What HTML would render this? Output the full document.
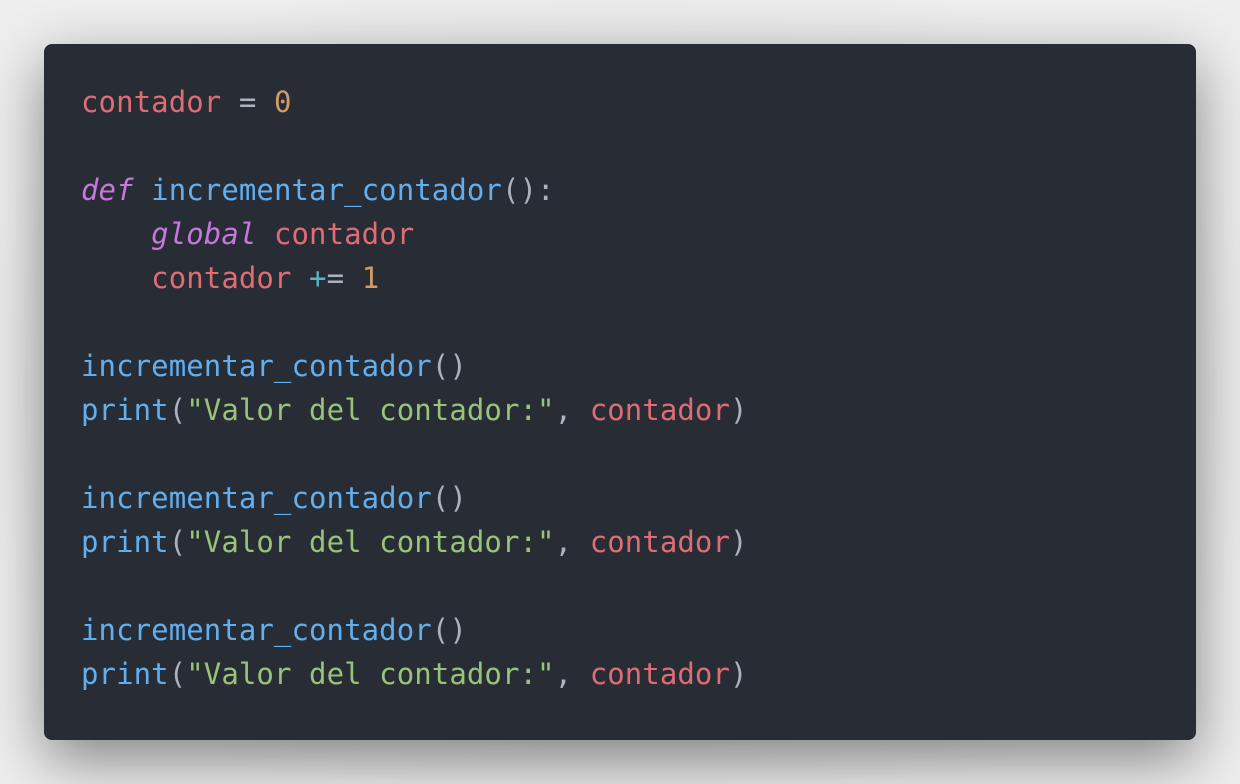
<!DOCTYPE html>
<html><head><style>
html,body{margin:0;padding:0;width:1240px;height:784px;overflow:hidden;background:#e9e9e9;}
body{background:radial-gradient(ellipse at center,#d4d4d4 0%,#eeeeee 80%);}
.card{position:absolute;left:44px;top:44px;width:1152px;height:696px;background:#282c34;border-radius:8px;box-shadow:0 20px 60px rgba(0,0,0,0.45);}
pre{margin:0;position:absolute;left:37px;top:36px;font-family:"DejaVu Sans Mono",monospace;font-size:29px;letter-spacing:0.08px;line-height:44px;color:#abb2bf;}
.r{color:#e06c75}.o{color:#d19a66}.p{color:#c678dd;font-style:italic}.b{color:#61afef}.g{color:#98c379}.c{color:#56b6c2}
</style></head><body>
<div class="card"><pre><span class="r">contador</span> = <span class="o">0</span>

<span class="p">def</span> <span class="b">incrementar_contador</span>():
    <span class="p">global</span> <span class="r">contador</span>
    <span class="r">contador</span> <span class="c">+</span>= <span class="o">1</span>

<span class="b">incrementar_contador</span>()
<span class="b">print</span>(<span class="g">"Valor del contador:"</span>, <span class="r">contador</span>)

<span class="b">incrementar_contador</span>()
<span class="b">print</span>(<span class="g">"Valor del contador:"</span>, <span class="r">contador</span>)

<span class="b">incrementar_contador</span>()
<span class="b">print</span>(<span class="g">"Valor del contador:"</span>, <span class="r">contador</span>)</pre></div>
</body></html>
